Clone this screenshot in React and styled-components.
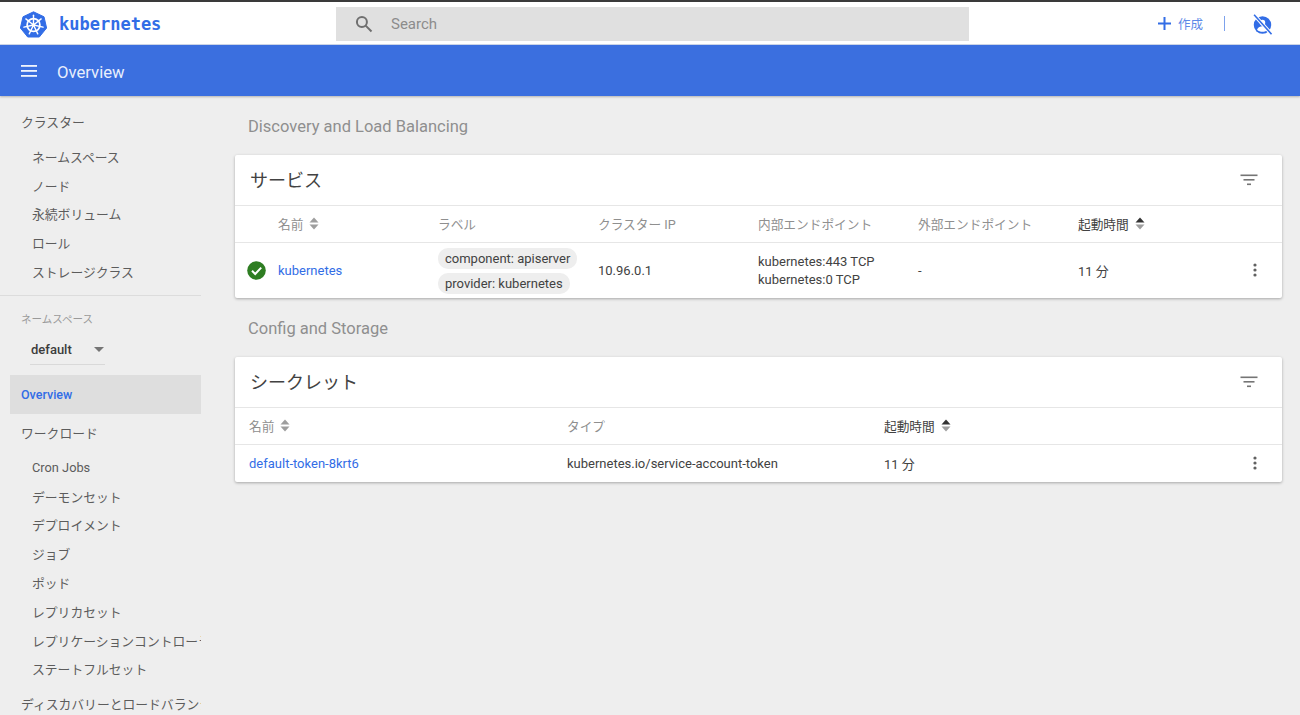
import React from 'react'
import styled, { createGlobalStyle } from 'styled-components'

const Global = createGlobalStyle`
  html, body { margin: 0; padding: 0; height: 100%; overflow: hidden; }
  body {
    background: #eeeeee;
    font-family: Roboto, "Noto Sans CJK JP", sans-serif;
    color: #424242;
  }
  * { box-sizing: border-box; }
`

const Page = styled.div`
  width: 1300px;
  height: 715px;
  display: flex;
  flex-direction: column;
  overflow: hidden;
`

const TopBar = styled.header`
  height: 45px;
  flex: none;
  background: #fff;
  border-top: 2px solid #3a3a3a;
  border-bottom: 1px solid #cfd8ea;
  display: flex;
  align-items: center;
  padding-left: 20px;
`

const Brand = styled.div`
  width: 316px;
  display: flex;
  align-items: center;
  gap: 12px;
  flex: none;
  padding-top: 2px;
`

const BrandName = styled.span`
  font-family: "DejaVu Sans Mono", monospace;
  font-weight: 700;
  font-size: 17px;
  color: #326de6;
`

const Search = styled.div`
  width: 633px;
  height: 34px;
  margin-top: 2px;
  flex: none;
  background: #e0e0e0;
  display: flex;
  align-items: center;
  padding-left: 18px;
  gap: 17px;
  font-size: 15px;
  color: #8c8c8c;
`

const TopActions = styled.div`
  margin-left: auto;
  display: flex;
  align-items: center;
  padding-right: 27px;
`

const CreateBtn = styled.span`
  display: flex;
  align-items: center;
  gap: 7px;
  font-size: 12.5px;
  color: #5d8ae8;
`

const VDivider = styled.span`
  width: 1px;
  height: 15px;
  background: #7da2ec;
  margin: 0 27px 0 21px;
`

const UserSlot = styled.span`
  display: flex;
  margin-top: 3px;
`

const BlueBar = styled.div`
  height: 51px;
  flex: none;
  background: #3b6fdf;
  display: flex;
  align-items: center;
  padding: 1px 0 0 20px;
  gap: 19px;
  color: #e8eefc;
  font-size: 16.7px;
  box-shadow: 0 1px 2px rgba(0, 0, 0, 0.25);
  position: relative;
`

const BarTitle = styled.span`
  padding-top: 2px;
`

const Body = styled.div`
  flex: 1;
  display: flex;
  min-height: 0;
`

const Sidebar = styled.nav`
  width: 201px;
  flex: none;
  overflow: hidden;
  font-size: 12.8px;
  color: #5c5c5c;
  padding-top: 11px;
`

const NavGroup = styled.div`
  height: 29px;
  padding-left: 21px;
  display: flex;
  align-items: center;
  white-space: nowrap;
  overflow: hidden;
  margin-top: ${(p) => p.$mt || 0}px;
  margin-bottom: ${(p) => p.$mb || 0}px;
`

const NavItem = styled.div`
  height: 28.8px;
  padding-left: 32px;
  display: flex;
  align-items: center;
  white-space: nowrap;
  overflow: hidden;
`

const NavRule = styled.div`
  height: 1px;
  background: #dcdcdc;
  margin-top: 9px;
`

const NsLabel = styled.div`
  font-size: 10.5px;
  color: #9a9a9a;
  padding-left: 21px;
  margin-top: 16px;
  line-height: 16px;
`

const NsSelect = styled.div`
  width: 75px;
  height: 30px;
  margin: 7px 0 0 30px;
  padding: 0 1px;
  display: flex;
  align-items: center;
  justify-content: space-between;
  font-size: 13px;
  font-weight: 500;
  color: #3c3c3c;
  border-bottom: 1px solid #d9d9d9;
`

const Caret = styled.span`
  width: 0;
  height: 0;
  border-left: 5px solid transparent;
  border-right: 5px solid transparent;
  border-top: 5px solid #757575;
`

const ActiveItem = styled.div`
  height: 39px;
  margin: 10px 0 0 10px;
  padding-left: 11px;
  background: #dedede;
  display: flex;
  align-items: center;
  color: #326de6;
  font-weight: 500;
  font-size: 12.5px;
`

const Main = styled.main`
  flex: 1;
  padding: 0 18px 0 34px;
`

const SectionTitle = styled.h2`
  margin: 0;
  font-size: 16.5px;
  font-weight: 400;
  color: #8f8f8f;
  padding: 2px 0 0 13px;
  height: 59px;
  display: flex;
  align-items: center;
`

const Card = styled.section`
  background: #fff;
  border-radius: 2px;
  box-shadow: 0 1px 3px rgba(0, 0, 0, 0.3);
`

const CardHead = styled.div`
  height: 51px;
  display: flex;
  align-items: center;
  justify-content: space-between;
  padding: 0 24px 0 15px;
  border-bottom: 1px solid #e6e6e6;
`

const CardTitle = styled.h3`
  margin: 0 0 3px;
  font-size: 18px;
  font-weight: 400;
  color: #424242;
`

const Row = styled.div`
  display: grid;
  grid-template-columns: ${(p) => p.$cols};
  align-items: center;
  height: ${(p) => p.$h}px;
  padding-left: ${(p) => p.$pl}px;
  position: relative;
`

const HeadRow = styled(Row)`
  border-bottom: 1px solid #e6e6e6;
  padding-bottom: 2px;
  font-size: 12.7px;
  color: #8f8f8f;
`

const DataRow = styled(Row)`
  font-size: 13px;
  color: #424242;
`

const Sortable = styled.span`
  display: flex;
  align-items: center;
  gap: 6px;
  color: ${(p) => (p.$active ? '#424242' : 'inherit')};
`

const Link = styled.span`
  color: #326de6;
`

const Chips = styled.div`
  display: flex;
  flex-direction: column;
  align-items: flex-start;
  gap: 4px;
`

const Chip = styled.span`
  height: 21px;
  padding: 0 7px;
  border-radius: 10px;
  background: #eeeeee;
  display: flex;
  align-items: center;
  white-space: nowrap;
`

const Endpoints = styled.div`
  line-height: 18px;
`

const Menu = styled.svg`
  position: absolute;
  right: 25px;
  top: calc(50% - 1px);
  transform: translateY(-50%);
`

const Logo = () => (
  <svg width="27" height="27" viewBox="0 0 27 27">
    <path d="M13.5 0.8 L24 5.8 L26.6 17 L19.3 26 L7.7 26 L0.4 17 L3 5.8 Z" fill="#326de6" stroke="#326de6" strokeLinejoin="round" />
    <circle cx="13.5" cy="14" r="6.4" fill="none" stroke="#fff" strokeWidth="1.7" />
    {[0, 1, 2, 3, 4, 5, 6].map((i) => (
      <path
        key={i}
        d="M13.5 14V4.2"
        stroke="#fff"
        strokeWidth="1.4"
        strokeLinecap="round"
        transform={`rotate(${(i * 360) / 7} 13.5 14)`}
      />
    ))}
    <circle cx="13.5" cy="14" r="1.8" fill="#fff" />
  </svg>
)

const SearchIcon = () => (
  <svg width="20" height="20" viewBox="0 0 24 24" fill="none" stroke="#6f6f6f" strokeWidth="2.4">
    <circle cx="9.5" cy="9.5" r="6" />
    <path d="M14 14L21 21" />
  </svg>
)

const Plus = () => (
  <svg width="13" height="13" viewBox="0 0 13 13" stroke="#326de6" strokeWidth="2">
    <path d="M6.5 0V13M0 6.5H13" />
  </svg>
)

const NoUser = () => (
  <svg width="21" height="21" viewBox="0 0 20 20">
    <circle cx="10" cy="10.5" r="8.3" fill="#326de6" />
    <circle cx="10" cy="8" r="2.6" fill="#fff" />
    <path d="M4.8 15c1-2.6 3-3.4 5.2-3.4s4.2.8 5.2 3.4c-1.4 1.3-3.2 2-5.2 2s-3.8-.7-5.2-2z" fill="#fff" />
    <path d="M2 0.8L18.6 19.2" stroke="#fff" strokeWidth="3.4" />
    <path d="M2 0.8L18.6 19.2" stroke="#326de6" strokeWidth="1.5" />
  </svg>
)

const Hamburger = () => (
  <svg width="18" height="14" viewBox="0 0 18 14" fill="#f0f4fd">
    <rect x="1" y="1" width="16" height="1.8" />
    <rect x="1" y="6" width="16" height="1.8" />
    <rect x="1" y="11" width="16" height="1.8" />
  </svg>
)

const FilterIcon = () => (
  <svg width="18" height="12" viewBox="0 0 18 12" fill="#757575">
    <rect x="0.5" y="0.5" width="17" height="1.6" />
    <rect x="3.5" y="5" width="11" height="1.6" />
    <rect x="7" y="9.5" width="4" height="1.6" />
  </svg>
)

const SortIcon = ({ active }) => (
  <svg width="10" height="13" viewBox="0 0 10 13">
    <path d="M5 0.5L9.5 5.5H0.5Z" fill={active ? '#333' : '#9e9e9e'} />
    <path d="M5 12.5L9.5 7.5H0.5Z" fill="#9e9e9e" />
  </svg>
)

const StatusOk = () => (
  <svg width="19" height="19" viewBox="0 0 19 19">
    <circle cx="9.5" cy="9.5" r="9.3" fill="#2e7d22" />
    <path d="M5 9.8L8.2 13L14.2 6.6" fill="none" stroke="#fff" strokeWidth="2" />
  </svg>
)

const Dots = () => (
  <Menu width="4" height="14" viewBox="0 0 4 14" fill="#616161">
    <circle cx="2" cy="2" r="1.6" />
    <circle cx="2" cy="7" r="1.6" />
    <circle cx="2" cy="12" r="1.6" />
  </Menu>
)

const clusterItems = ['ネームスペース', 'ノード', '永続ボリューム', 'ロール', 'ストレージクラス']
const workloadItems = ['Cron Jobs', 'デーモンセット', 'デプロイメント', 'ジョブ', 'ポッド', 'レプリカセット', 'レプリケーションコントローラー', 'ステートフルセット']

const serviceCols = '31px 160px 160px 160px 160px 160px 1fr'
const secretCols = '318px 317px 1fr'

export default function App() {
  return (
    <Page>
      <Global />
      <TopBar>
        <Brand>
          <Logo />
          <BrandName>kubernetes</BrandName>
        </Brand>
        <Search>
          <SearchIcon />
          Search
        </Search>
        <TopActions>
          <CreateBtn>
            <Plus />
            作成
          </CreateBtn>
          <VDivider />
          <UserSlot>
            <NoUser />
          </UserSlot>
        </TopActions>
      </TopBar>
      <BlueBar>
        <Hamburger />
        <BarTitle>Overview</BarTitle>
      </BlueBar>
      <Body>
        <Sidebar>
          <NavGroup $mb={6}>クラスター</NavGroup>
          {clusterItems.map((t) => (
            <NavItem key={t}>{t}</NavItem>
          ))}
          <NavRule />
          <NsLabel>ネームスペース</NsLabel>
          <NsSelect>
            default
            <Caret />
          </NsSelect>
          <ActiveItem>Overview</ActiveItem>
          <NavGroup $mt={4} $mb={6}>ワークロード</NavGroup>
          {workloadItems.map((t) => (
            <NavItem key={t}>{t}</NavItem>
          ))}
          <NavGroup $mt={6}>ディスカバリーとロードバランシング</NavGroup>
        </Sidebar>
        <Main>
          <SectionTitle>Discovery and Load Balancing</SectionTitle>
          <Card>
            <CardHead>
              <CardTitle>サービス</CardTitle>
              <FilterIcon />
            </CardHead>
            <HeadRow $cols={serviceCols} $h={37} $pl={12}>
              <span />
              <Sortable>名前 <SortIcon /></Sortable>
              <span>ラベル</span>
              <span>クラスター IP</span>
              <span>内部エンドポイント</span>
              <span>外部エンドポイント</span>
              <Sortable $active>起動時間 <SortIcon active /></Sortable>
            </HeadRow>
            <DataRow $cols={serviceCols} $h={55} $pl={12}>
              <StatusOk />
              <Link>kubernetes</Link>
              <Chips>
                <Chip>component: apiserver</Chip>
                <Chip>provider: kubernetes</Chip>
              </Chips>
              <span>10.96.0.1</span>
              <Endpoints>
                kubernetes:443 TCP
                <br />
                kubernetes:0 TCP
              </Endpoints>
              <span>-</span>
              <span>11 分</span>
              <Dots />
            </DataRow>
          </Card>
          <SectionTitle>Config and Storage</SectionTitle>
          <Card>
            <CardHead>
              <CardTitle>シークレット</CardTitle>
              <FilterIcon />
            </CardHead>
            <HeadRow $cols={secretCols} $h={37} $pl={14}>
              <Sortable>名前 <SortIcon /></Sortable>
              <span>タイプ</span>
              <Sortable $active>起動時間 <SortIcon active /></Sortable>
            </HeadRow>
            <DataRow $cols={secretCols} $h={37} $pl={14}>
              <Link>default-token-8krt6</Link>
              <span>kubernetes.io/service-account-token</span>
              <span>11 分</span>
              <Dots />
            </DataRow>
          </Card>
        </Main>
      </Body>
    </Page>
  )
}
